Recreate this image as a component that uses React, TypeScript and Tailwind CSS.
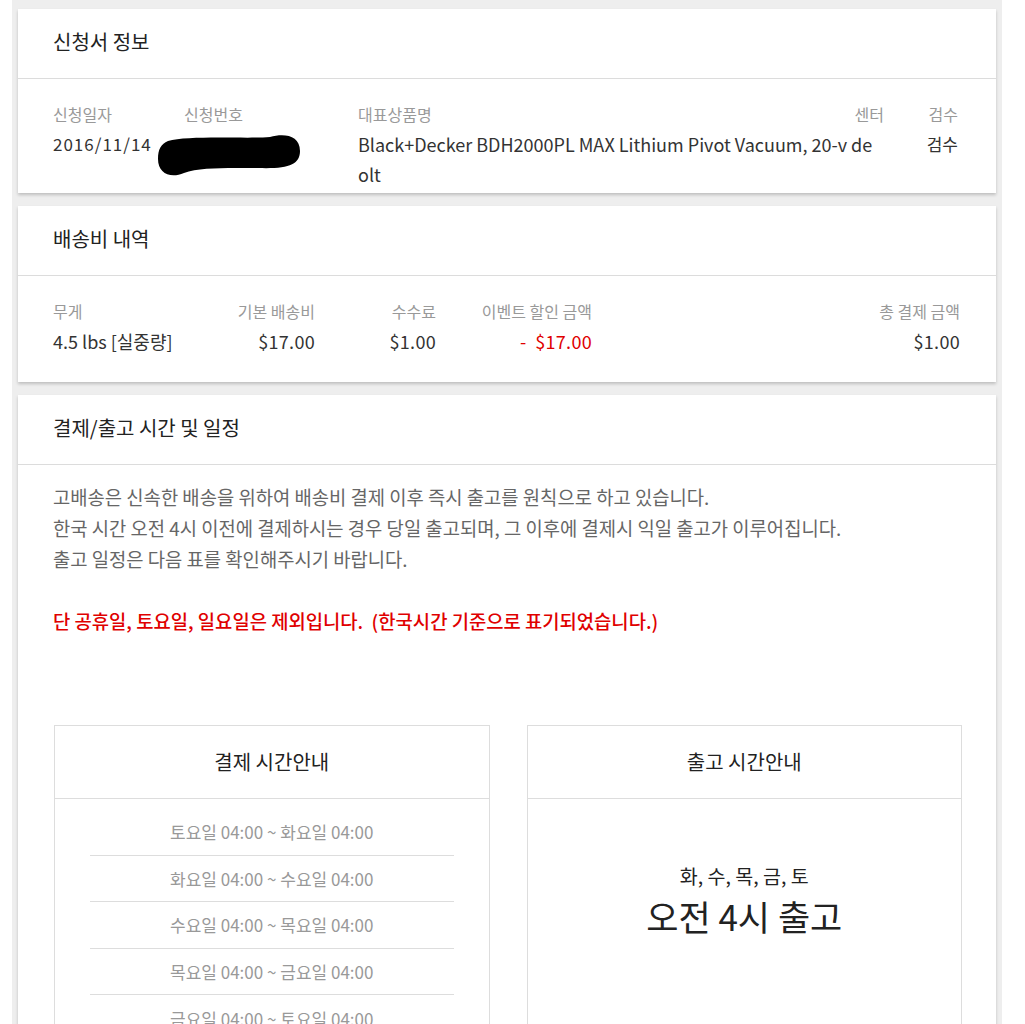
import React from "react";

function CardHeader({ title }: { title: string }) {
  return (
    <div className="h-[70px] flex items-center pb-[3px] pl-[35px] border-b border-[#dcdcdc] text-[20px] text-[#222]">
      {title}
    </div>
  );
}

const rows = [
  "토요일 04:00 ~ 화요일 04:00",
  "화요일 04:00 ~ 수요일 04:00",
  "수요일 04:00 ~ 목요일 04:00",
  "목요일 04:00 ~ 금요일 04:00",
  "금요일 04:00 ~ 토요일 04:00",
];

const cardCls = "bg-white shadow-[0_2px_3px_rgba(0,0,0,0.2)]";

export default function App() {
  return (
    <div className="min-h-screen bg-white font-['Noto_Sans_CJK_KR','Noto_Sans',sans-serif]">
      <div className="ml-[12px] w-[990px] bg-[#eeeeee] px-[6px] pt-[9px] pb-[20px] flex flex-col gap-[13px]">
        {/* Card 1 */}
        <div className={cardCls}>
          <CardHeader title="신청서 정보" />
          <div className="pt-[20px] pb-[4px] pl-[35px] pr-[38px] leading-[30px]">
            <div className="flex text-[16px] text-[#999]">
              <div className="w-[131px] flex-none">신청일자</div>
              <div className="w-[174px] flex-none">신청번호</div>
              <div className="flex-1 flex justify-between">
                <span>대표상품명</span>
                <span>센터</span>
              </div>
              <div className="w-[74px] flex-none text-right">검수</div>
            </div>
            <div className="flex text-[17px] text-[#333]">
              <div className="w-[131px] flex-none tracking-[1px]">2016/11/14</div>
              <div className="w-[174px] flex-none relative">
                <div className="absolute left-[-26px] top-[4px]">
                  <svg width="142" height="45" viewBox="0 0 142 45">
                    <path
                      d="M10 8 C30 2 90 6 112 4 C126 0 142 2 142 18 C142 32 130 36 100 35 C70 35 42 34 26 40 C12 46 0 40 0 26 C0 16 3 11 10 8 Z"
                      fill="#000"
                    />
                  </svg>
                </div>
              </div>
              <div className="flex-1">
                <div className="w-[524px] break-all text-[18px]">
                  Black+Decker BDH2000PL MAX Lithium Pivot Vacuum, 20-v deolt
                </div>
              </div>
              <div className="w-[74px] flex-none text-right">검수</div>
            </div>
          </div>
        </div>

        {/* Card 2 */}
        <div className={cardCls}>
          <CardHeader title="배송비 내역" />
          <div className="pt-[20px] pb-[26px] pl-[35px] pr-[36px] flex leading-[30px]">
            <div className="w-[160px] flex-none">
              <div className="text-[#999] text-[16px]">무게</div>
              <div className="text-[#333] text-[18px]">4.5 lbs [실중량]</div>
            </div>
            <div className="w-[102px] flex-none text-right">
              <div className="text-[#999] text-[16px]">기본 배송비</div>
              <div className="text-[#333] text-[18px] tracking-[0.3px]">$17.00</div>
            </div>
            <div className="w-[121px] flex-none text-right">
              <div className="text-[#999] text-[16px]">수수료</div>
              <div className="text-[#333] text-[18px] tracking-[0.3px]">$1.00</div>
            </div>
            <div className="w-[156px] flex-none text-right">
              <div className="text-[#999] text-[16px]">이벤트 할인 금액</div>
              <div className="text-[#e00000] text-[18px] tracking-[0.3px]">-&nbsp; $17.00</div>
            </div>
            <div className="flex-1 text-right">
              <div className="text-[#999] text-[16px]">총 결제 금액</div>
              <div className="text-[#333] text-[18px] tracking-[0.3px]">$1.00</div>
            </div>
          </div>
        </div>

        {/* Card 3 */}
        <div className={cardCls}>
          <CardHeader title="결제/출고 시간 및 일정" />
          <div className="pt-[16px] pl-[35px] pr-[36px] text-[18.8px] leading-[31px] text-[#666]">
            <p>고배송은 신속한 배송을 위하여 배송비 결제 이후 즉시 출고를 원칙으로 하고 있습니다.</p>
            <p>한국 시간 오전 4시 이전에 결제하시는 경우 당일 출고되며, 그 이후에 결제시 익일 출고가 이루어집니다.</p>
            <p>출고 일정은 다음 표를 확인해주시기 바랍니다.</p>
            <p>&nbsp;</p>
            <p className="text-[#e00000] font-medium">
              단 공휴일, 토요일, 일요일은 제외입니다.&nbsp; (한국시간 기준으로 표기되었습니다.)
            </p>
          </div>
          <div className="mt-[89px] pl-[36px] pr-[34px] grid grid-cols-2 gap-[37px] pb-[20px]">
            <div className="border border-[#dddddd]">
              <div className="h-[73px] flex items-center justify-center border-b border-[#dddddd] text-[20px] text-[#222]">
                결제 시간안내
              </div>
              <div className="pt-[10px] pb-[10px] px-[35px]">
                {rows.map((r, i) => (
                  <div
                    key={r}
                    className={`h-[46.5px] flex items-center justify-center text-[17px] text-[#999] ${
                      i < rows.length - 1 ? "border-b border-[#dddddd]" : ""
                    }`}
                  >
                    {r}
                  </div>
                ))}
              </div>
            </div>
            <div className="border border-[#dddddd]">
              <div className="h-[73px] flex items-center justify-center border-b border-[#dddddd] text-[20px] text-[#222]">
                출고 시간안내
              </div>
              <div className="pt-[63px] flex flex-col items-center">
                <div className="text-[19.5px] leading-[28px] text-[#222]">화, 수, 목, 금, 토</div>
                <div className="mt-[6px] text-[35px] leading-[40px] text-[#222]">오전 4시 출고</div>
              </div>
            </div>
          </div>
        </div>
      </div>
    </div>
  );
}
